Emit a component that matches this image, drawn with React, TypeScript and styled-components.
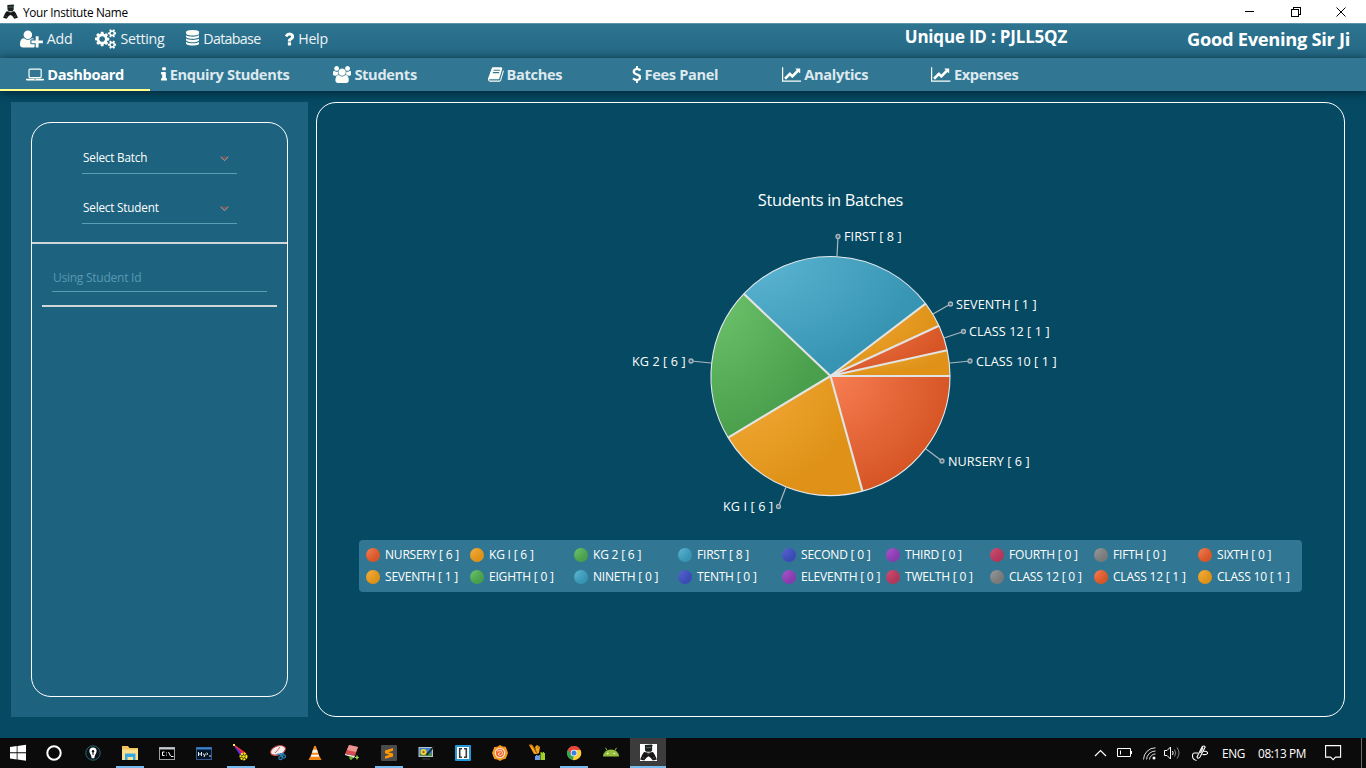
import React from "react";
import styled, { createGlobalStyle } from "styled-components";

const GlobalStyle = createGlobalStyle`
  * { box-sizing: border-box; }
  html, body { margin: 0; padding: 0; overflow: hidden; }
  body { font-family: "Open Sans", "Noto Sans", sans-serif; background: #054963; }
`;

const Window = styled.div`
  width: 1366px;
  height: 768px;
  display: flex;
  flex-direction: column;
  background: #054963;
  overflow: hidden;
`;

/* ---------- title bar ---------- */
const TitleBar = styled.header`
  height: 23px;
  flex: none;
  display: flex;
  align-items: center;
  background: #fff;
  padding: 0 2px 0 3px;
  color: #000;
`;
const TitleText = styled.span`
  flex: 1;
  margin-left: 5px;
  font-size: 11.8px;
  line-height: 22px;
  letter-spacing: -0.3px;
`;
const WindowButton = styled.span`
  width: 45.5px;
  height: 22px;
  display: flex;
  align-items: center;
  justify-content: center;
`;

/* ---------- menu ---------- */
const MenuBar = styled.nav`
  height: 35px;
  flex: none;
  display: flex;
  align-items: flex-start;
  padding: 0 16px 0 20px;
  background: linear-gradient(#2d7491, #246884);
  border-top: 1px solid #5a93aa;
`;
const MenuItem = styled.div<{ $width: number; $track: number; $height: number }>`
  width: ${(p) => p.$width}px;
  height: ${(p) => p.$height}px;
  display: flex;
  align-items: center;
  gap: 4px;
  color: #eef4f6;
  font-size: 14.2px;
  letter-spacing: ${(p) => p.$track}px;
`;
const MenuSpacer = styled.div`
  flex: 1;
`;
const Headline = styled.div<{ $size: number; $height: number; $gap?: number; $track: number }>`
  color: #fff;
  font-weight: 700;
  font-size: ${(p) => p.$size}px;
  line-height: ${(p) => p.$height}px;
  margin-right: ${(p) => p.$gap ?? 0}px;
  letter-spacing: ${(p) => p.$track}px;
  white-space: nowrap;
`;

/* ---------- tabs ---------- */
const TabBar = styled.nav`
  height: 33px;
  flex: none;
  display: flex;
  background: #317793;
  box-shadow: 0 1px 9px rgba(0, 20, 30, 0.75);
  z-index: 1;
`;
const Tab = styled.div<{ $active?: boolean }>`
  width: 150px;
  height: 33px;
  display: flex;
  align-items: center;
  justify-content: center;
  gap: 3px;
  padding-top: 2px;
  color: ${(p) => (p.$active ? "#fff" : "#dde9ee")};
  font-weight: 700;
  font-size: 14.6px;
  letter-spacing: -0.32px;
  border-bottom: 2px solid ${(p) => (p.$active ? "#ffff8d" : "transparent")};
  white-space: nowrap;

  span {
    padding-bottom: 2px;
  }
`;

/* ---------- body ---------- */
const Body = styled.main`
  flex: 1;
  display: flex;
  gap: 8px;
  padding: 11px 21px 21px 11px;
`;
const SidePanel = styled.aside`
  width: 297px;
  padding: 20px;
  background: #1d637f;
  display: flex;
`;
const SideCard = styled.div`
  flex: 1;
  border: 1px solid #fff;
  border-radius: 20px;
  display: flex;
  flex-direction: column;
  align-items: center;
  padding-top: 20px;
`;
const Select = styled.div<{ $after: number }>`
  width: 155px;
  height: 31px;
  margin-bottom: ${(p) => p.$after}px;
  padding: 0 8px 2px 1px;
  display: flex;
  align-items: center;
  justify-content: space-between;
  border-bottom: 1px solid #5c9db6;
  color: #fff;
  font-size: 11.7px;
  letter-spacing: -0.17px;

  svg {
    margin-top: 4px;
  }
`;
const Rule = styled.div<{ $width: number }>`
  width: ${(p) => p.$width}px;
  height: 2px;
  background: #cfd6da;
`;
const IdField = styled.div`
  width: 215px;
  height: 28px;
  margin: 20px 0 13px;
  padding-left: 1px;
  border-bottom: 1px solid #5c9db6;
  color: #5a98b1;
  font-size: 12px;
  line-height: 28px;
  letter-spacing: -0.25px;
`;
const ChartCard = styled.section`
  flex: 1;
  border: 1px solid #fff;
  border-radius: 20px;
  display: flex;
  flex-direction: column;
  align-items: center;
  padding-top: 85px;
`;
const ChartTitle = styled.h1`
  margin: 0;
  font-size: 16.4px;
  font-weight: 400;
  line-height: 24px;
  color: #fff;
  letter-spacing: -0.3px;
`;
const Pie = styled.svg`
  display: block;
  margin-top: 8px;
  flex: none;
`;
const Legend = styled.div`
  width: 943px;
  height: 52px;
  margin-top: 20px;
  padding: 4px 0 4px 7px;
  background: #317793;
  border-radius: 4px;
  display: grid;
  grid-template-columns: repeat(9, 104px);
  grid-template-rows: 22px 22px;
`;
const LegendItem = styled.div`
  display: flex;
  align-items: center;
  gap: 5px;
  color: #fff;
  font-size: 12px;
  letter-spacing: -0.2px;
  line-height: 16px;
  white-space: nowrap;
`;

/* ---------- taskbar ---------- */
const Taskbar = styled.footer`
  height: 30px;
  flex: none;
  display: flex;
  background: #0b0b0b;
  color: #fff;
`;
const TaskCell = styled.div<{ $width?: number; $before?: number; $after?: number; $state?: "open" | "active" }>`
  width: ${(p) => p.$width ?? 37}px;
  height: 30px;
  margin: 0 ${(p) => p.$after ?? 0}px 0 ${(p) => p.$before ?? 0}px;
  display: flex;
  flex-direction: column;
  align-items: center;
  justify-content: space-between;
  padding-top: 6px;
  background: ${(p) => (p.$state === "active" ? "#3c3c3c" : "transparent")};
  &::after {
    content: "";
    height: 2px;
    width: ${(p) => (p.$state === "active" ? "100%" : "28px")};
    background: ${(p) => (p.$state ? "#76b9ed" : "transparent")};
  }
`;
const Tray = styled.div`
  margin-left: auto;
  display: flex;
  align-items: center;
  font-size: 11.8px;
  letter-spacing: -0.35px;
`;
const TrayCell = styled.span<{ $width: number }>`
  width: ${(p) => p.$width}px;
  height: 30px;
  display: flex;
  align-items: center;
  white-space: nowrap;
`;
const ShowDesktop = styled.span`
  width: 5px;
  height: 30px;
  border-left: 1px solid #6a6a6a;
`;

/* ---------- glyphs ---------- */
const SMALL_GEAR =
  "v140q0 16-149 31-12 27-30 52 51 113 51 138 0 4-4 7-122 71-124 71-8 0-46-47t-52-68q-20 2-30 2t-30-2q-14 21-52 68t-46 47q-2 0-124-71-4-3-4-7 0-25 51-138-18-25-30-52-149-15-149-31v-140q0-16 149-31 13-29 30-52-51-113-51-138 0-4 4-7 4-2 35-20t59-34 30-16q8 0 46 46.5t52 67.5q20-2 30-2t30 2q51-71 92-112l6-2q4 0 124 70 4 3 4 7 0 25-51 138 17 23 30 52 149 15 149 31z";
const DISC = "q237 0 443-43t325-127v170q0 69-103 128t-280 93.5-385 34.5-385-34.5-280-93.5-103-128v-170q119 84 325 127t443 43z";

const GLYPHS: Record<string, [number, string]> = {
  userPlus: [2048, "M704 896q-159 0-271.5-112.5t-112.5-271.5 112.5-271.5 271.5-112.5 271.5 112.5 112.5 271.5-112.5 271.5-271.5 112.5zm960 128h352q13 0 22.5 9.5t9.5 22.5v192q0 13-9.5 22.5t-22.5 9.5h-352v352q0 13-9.5 22.5t-22.5 9.5h-192q-13 0-22.5-9.5t-9.5-22.5v-352h-352q-13 0-22.5-9.5t-9.5-22.5v-192q0-13 9.5-22.5t22.5-9.5h352v-352q0-13 9.5-22.5t22.5-9.5h192q13 0 22.5 9.5t9.5 22.5v352zm-736 224q0 52 38 90t90 38h256v238q-68 50-171 50h-874q-121 0-194-69t-73-190q0-53 3.5-103.5t14-109 26.5-108.5 43-97.5 62-81 85.5-53.5 111.5-20q19 0 39 17 79 61 154.5 91.5t164.5 30.5 164.5-30.5 154.5-91.5q20-17 39-17 132 0 217 96h-223q-52 0-90 38t-38 90v192z"],
  cogs: [1920, "M896 896q0-106-75-181t-181-75-181 75-75 181 75 181 181 75 181-75 75-181zm768 512q0-52-38-90t-90-38-90 38-38 90q0 53 37.5 90.5t90.5 37.5 90.5-37.5 37.5-90.5zm0-1024q0-52-38-90t-90-38-90 38-38 90q0 53 37.5 90.5t90.5 37.5 90.5-37.5 37.5-90.5zm-384 421v185q0 10-7 19.5t-16 10.5l-155 24q-11 35-32 76 34 48 90 115 7 11 7 20 0 12-7 19-23 30-82.5 89.5t-78.5 59.5q-11 0-21-7l-115-90q-37 19-77 31-11 108-23 155-7 24-30 24h-186q-11 0-20-7.5t-10-17.5l-23-153q-34-10-75-31l-118 89q-7 7-20 7-11 0-21-8-144-133-144-160 0-9 7-19 10-14 41-53t47-61q-23-44-35-82l-152-24q-10-1-17-9.5t-7-19.5v-185q0-10 7-19.5t16-10.5l155-24q11-35 32-76-34-48-90-115-7-11-7-20 0-12 7-20 22-30 82-89t79-59q11 0 21 7l115 90q34-18 77-32 11-108 23-154 7-24 30-24h186q11 0 20 7.5t10 17.5l23 153q34 10 75 31l118-89q8-7 20-7 11 0 21 8 144 133 144 160 0 8-7 19-12 16-42 54t-45 60q23 48 34 82l152 23q10 2 17 10.5t7 19.5zm640 533" + SMALL_GEAR + "m0-1024" + SMALL_GEAR],
  database: [1536, "M768 768" + DISC + "m0 768" + DISC + "m0-384" + DISC + "m0-1152q208 0 385 34.5t280 93.5 103 128v128q0 69-103 128t-280 93.5-385 34.5-385-34.5-280-93.5-103-128v-128q0-69 103-128t280-93.5 385-34.5z"],
  question: [1024, "M704 1256v240q0 16-12 28t-28 12h-240q-16 0-28-12t-12-28v-240q0-16 12-28t28-12h240q16 0 28 12t12 28zm316-600q0 54-15.5 101t-35 76.5-55 59.5-57.5 43.5-61 35.5q-41 23-68.5 65t-27.5 67q0 17-12 32.5t-28 15.5h-240q-15 0-25.5-18.5t-10.5-37.5v-45q0-83 65-156.5t143-108.5q59-27 84-56t25-76q0-42-46.5-74t-107.5-32q-65 0-108 29-35 25-107 115-13 16-31 16-12 0-25-8l-164-125q-13-10-15.5-25t5.5-28q160-266 464-266 80 0 161 31t146 83 106 127.5 41 158.5z"],
  laptop: [1920, "M416 1280q-66 0-113-47t-47-113v-704q0-66 47-113t113-47h1088q66 0 113 47t47 113v704q0 66-47 113t-113 47h-1088zm-32-864v704q0 13 9.5 22.5t22.5 9.5h1088q13 0 22.5-9.5t9.5-22.5v-704q0-13-9.5-22.5t-22.5-9.5h-1088q-13 0-22.5 9.5t-9.5 22.5zm1376 928h160v96q0 40-47 68t-113 28h-1600q-66 0-113-28t-47-68v-96h1760zm-720 96q16 0 16-16t-16-16h-160q-16 0-16 16t16 16h160z"],
  info: [640, "M640 1344v128q0 26-19 45t-45 19h-512q-26 0-45-19t-19-45v-128q0-26 19-45t45-19h64v-384h-64q-26 0-45-19t-19-45v-128q0-26 19-45t45-19h384q26 0 45 19t19 45v576h64q26 0 45 19t19 45zm-128-1152v192q0 26-19 45t-45 19h-256q-26 0-45-19t-19-45v-192q0-26 19-45t45-19h256q26 0 45 19t19 45z"],
  users: [1920, "M593 896q-162 5-265 128h-134q-82 0-138-40.5t-56-118.5q0-353 124-353 6 0 43.5 21t97.5 42.5 119 21.5q67 0 133-23-5 37-5 66 0 139 81 256zm1071 637q0 120-73 189.5t-194 69.5h-874q-121 0-194-69.5t-73-189.5q0-53 3.5-103.5t14-109 26.5-108.5 43-97.5 62-81 85.5-53.5 111.5-20q10 0 43 21.5t73 48 107 48 135 21.5 135-21.5 107-48 73-48 43-21.5q61 0 111.5 20t85.5 53.5 62 81 43 97.5 26.5 108.5 14 109 3.5 103.5zm-1024-1277q0 106-75 181t-181 75-181-75-75-181 75-181 181-75 181 75 75 181zm704 384q0 159-112.5 271.5t-271.5 112.5-271.5-112.5-112.5-271.5 112.5-271.5 271.5-112.5 271.5 112.5 112.5 271.5zm576 225q0 78-56 118.5t-138 40.5h-134q-103-123-265-128 81-117 81-256 0-29-5-66 66 23 133 23 59 0 119-21.5t97.5-42.5 43.5-21q124 0 124 353zm-128-609q0 106-75 181t-181 75-181-75-75-181 75-181 181-75 181 75 75 181z"],
  book: [1664, "M1639 478q40 57 18 129l-275 906q-19 64-76.5 107.5t-122.5 43.5h-923q-77 0-148.5-53.5t-99.5-131.5q-24-67-2-127 0-4 3-27t4-37q1-8-3-21.5t-3-19.5q2-11 8-21t16.5-23.5 16.5-23.5q23-38 45-91.5t30-91.5q3-10 .5-30t-.5-28q3-11 17-28t17-23q21-36 42-92t25-90q1-9-2.5-32t.5-28q4-13 22-30.5t22-22.5q19-26 42.5-84.5t27.5-96.5q1-8-3-25.5t-2-26.5q2-8 9-18t18-23 17-21q8-12 16.5-30.5t15-35 16-36 19.5-32 26.5-23.5 36-11.5 47.5 5.5l-1 3q38-9 51-9h761q74 0 114 56t18 130l-274 906q-36 119-71.5 153.5t-128.5 34.5h-869q-27 0-38 15-11 16-1 43 24 70 144 70h923q29 0 56-15.5t35-41.5l300-987q7-22 5-57 38 15 59 43zm-1064 2q-4 13 2 22.5t20 9.5h608q13 0 25.5-9.5t16.5-22.5l21-64q4-13-2-22.5t-20-9.5h-608q-13 0-25.5 9.5t-16.5 22.5zm-83 256q-4 13 2 22.5t20 9.5h608q13 0 25.5-9.5t16.5-22.5l21-64q4-13-2-22.5t-20-9.5h-608q-13 0-25.5 9.5t-16.5 22.5z"],
  dollar: [1024, "M978 1185q0 153-99.5 263.5t-258.5 136.5v175q0 14-9 23t-23 9h-135q-13 0-22.5-9.5t-9.5-22.5v-175q-66-9-127.5-31t-101.5-44.5-74-48-46.5-37.5-17.5-18q-17-21-2-41l103-135q7-10 23-12 15-2 24 9l2 2q113 99 243 125 37 8 74 8 81 0 142.5-43t61.5-122q0-28-15-53t-33.5-42-58.5-37.5-66-32-80-32.5q-39-16-61.5-25t-61.5-26.5-62.5-31-56.5-35.5-53.5-42.5-43.5-49-35.5-58-21-66.5-8.5-78q0-138 98-242t255-134v-180q0-13 9.5-22.5t22.5-9.5h135q14 0 23 9t9 23v176q57 6 110.5 23t87 33.5 63.5 37.5 39 29 15 14q17 18 5 38l-81 146q-8 15-23 16-14 3-27-7-3-3-14.5-12t-39-26.5-58.5-32-74.5-26-85.5-11.5q-95 0-155 43t-60 111q0 26 8.5 48t29.5 41.5 39.5 33 56 31 60.5 27 70 27.5q53 20 81 31.5t76 35 75.5 42.5 62 50 53 63.5 31.5 76.5 13 94z"],
  chart: [2048, "M2048 1536v128h-2048v-1536h128v1408h1920zm-128-1248v435q0 21-19.5 29.5t-35.5-7.5l-121-121-633 633q-10 10-23 10t-23-10l-233-233-416 416-192-192 585-585q10-10 23-10t23 10l233 233 464-464-121-121q-16-16-7.5-35.5t29.5-19.5h435q14 0 23 9t9 23z"],
};

function Glyph({ name, size }: { name: string; size: number }) {
  const [w, d] = GLYPHS[name];
  return (
    <svg width={(w / 1792) * size} height={size} viewBox={`0 0 ${w} 1792`} fill="#fffffa">
      <path d={d} />
    </svg>
  );
}

function ReaderIcon({ size, tile }: { size: number; tile?: boolean }) {
  return (
    <svg width={size} height={size} viewBox="0 0 16 16">
      {tile && <rect width="16" height="16" fill="#fff" />}
      <path d="M4.600 1l6.600-.6.800 1-.6.6v4.200L10.400 7.400H6L4.800 6.400z" fill="#1c2422" />
      <path d="M5.800 2.800h4.600v1H5.800z" fill="#53665c" />
      <path d="M3.800 7.600l4.200.6 4.200-.6 1.700 2.400 2 4.600-3.800 1-2.400-3L8 11.600l-1.700 1-2.400 3-3.800-1L2.100 10z" fill="#161616" />
      <path d="M2.400 12.600l1.600.8M12 13.400l1.600-.8M6.800 9.200h2.400" stroke="#777" strokeWidth=".7" />
    </svg>
  );
}

const MENU = [
  { icon: "userPlus", size: 20, label: "Add", width: 75, track: -0.2, height: 29 },
  { icon: "cogs", size: 20, label: "Setting", width: 91, track: -0.25, height: 29 },
  { icon: "database", size: 15.5, label: "Database", width: 98, track: -0.65, height: 28 },
  { icon: "question", size: 18, label: "Help", width: 60, track: -0.3, height: 29 },
];

const TABS = [
  ["laptop", "Dashboard"],
  ["info", "Enquiry Students"],
  ["users", "Students"],
  ["book", "Batches"],
  ["dollar", "Fees Panel"],
  ["chart", "Analytics"],
  ["chart", "Expenses"],
];

/* ---------- chart ---------- */
const COLORS: Record<string, [string, string]> = {
  red: ["#f77e53", "#d75626"],
  orange: ["#f5ae3e", "#df9217"],
  green: ["#70c46e", "#499f4b"],
  blue: ["#5eb7d4", "#3795b3"],
  indigo: ["#5966cf", "#3b4bb6"],
  purple: ["#aa55cf", "#883bae"],
  crimson: ["#d24f75", "#b0385a"],
  gray: ["#999b9c", "#787979"],
};

const SLICES = [
  { value: 6, color: "red", label: "NURSERY [ 6 ]", from: [926, 449], dot: [942, 461], x: 948, w: 81.5 },
  { value: 6, color: "orange", label: "KG I [ 6 ]", from: [786, 487], dot: [778.5, 506.5], x: 723, w: 50 },
  { value: 6, color: "green", label: "KG 2 [ 6 ]", from: [711, 363], dot: [691, 361], x: 632, w: 53.5 },
  { value: 8, color: "blue", label: "FIRST [ 8 ]", from: [837, 256], dot: [838, 236.5], x: 844, w: 57.5 },
  { value: 1, color: "orange", label: "SEVENTH [ 1 ]", from: [933, 314], dot: [950.5, 304], x: 956, w: 80.5 },
  { value: 1, color: "red", label: "CLASS 12 [ 1 ]", from: [944, 338], dot: [963.5, 331.5], x: 969, w: 80.5 },
  { value: 1, color: "orange", label: "CLASS 10 [ 1 ]", from: [950, 363], dot: [970, 361], x: 976, w: 80.5 },
];

const LEGEND: [string, string][] = [
  ["red", "NURSERY [ 6 ]"], ["orange", "KG I [ 6 ]"], ["green", "KG 2 [ 6 ]"], ["blue", "FIRST [ 8 ]"],
  ["indigo", "SECOND [ 0 ]"], ["purple", "THIRD [ 0 ]"], ["crimson", "FOURTH [ 0 ]"], ["gray", "FIFTH [ 0 ]"],
  ["red", "SIXTH [ 0 ]"], ["orange", "SEVENTH [ 1 ]"], ["green", "EIGHTH [ 0 ]"], ["blue", "NINETH [ 0 ]"],
  ["indigo", "TENTH [ 0 ]"], ["purple", "ELEVENTH [ 0 ]"], ["crimson", "TWELTH [ 0 ]"], ["gray", "CLASS 12 [ 0 ]"],
  ["red", "CLASS 12 [ 1 ]"], ["orange", "CLASS 10 [ 1 ]"],
];

function PieChart() {
  const cx = 830.5;
  const cy = 376;
  const r = 119.5;
  const total = SLICES.reduce((sum, s) => sum + s.value, 0);
  let angle = 0;
  return (
    <Pie width="481" height="300" viewBox="590 220 481 300">
      <defs>
        {Object.entries(COLORS).map(([name, [light, dark]]) => (
          <radialGradient key={name} id={`fill-${name}`} cx="0" cy="0" r="1" fx="0" fy="0">
            <stop offset="0" stopColor={light} />
            <stop offset="1" stopColor={dark} />
          </radialGradient>
        ))}
      </defs>
      {SLICES.map((s) => {
        const a0 = angle;
        const a1 = (angle += (s.value / total) * Math.PI * 2);
        const p = (a: number) => `${cx + r * Math.cos(a)} ${cy + r * Math.sin(a)}`;
        return (
          <g key={s.label}>
            <path d={`M${cx} ${cy}L${p(a0)}A${r} ${r} 0 0 1 ${p(a1)}Z`} fill={`url(#fill-${s.color})`} />
            <path d={`M${p(a0)}A${r} ${r} 0 0 1 ${p(a1)}`} fill="none" stroke="#e4eaee" strokeWidth="1.1" />
          </g>
        );
      })}
      {SLICES.map((s) => {
        const a = (angle += (s.value / total) * Math.PI * 2);
        return (
          <line key={s.label} x1={cx} y1={cy} x2={cx + r * Math.cos(a)} y2={cy + r * Math.sin(a)} stroke="#e2e4e4" strokeWidth="2.1" />
        );
      })}
      {SLICES.map((s) => (
        <g key={s.label}>
          <line x1={s.from[0]} y1={s.from[1]} x2={s.dot[0]} y2={s.dot[1]} stroke="#a9b8c0" strokeWidth="1.2" />
          <circle cx={s.dot[0]} cy={s.dot[1]} r="2" fill="#41687b" stroke="#a9b5bd" strokeWidth="1.3" />
          <text x={s.x} y={Math.floor(s.dot[1]) + 5} textLength={s.w} fontSize="12.6" fill="#fff">
            {s.label}
          </text>
        </g>
      ))}
    </Pie>
  );
}

/* ---------- taskbar pictures ---------- */
type Task = { state?: "open" | "active"; art: React.ReactNode };
const TASKS: Task[] = [
  { art: <><circle cx="9" cy="9" r="7.2" fill="#081418" stroke="#2a6270" /><path d="M9 3.5a3.6 3.6 0 0 1 3.6 3.7c0 2-2.2 3.6-2.2 7H7.6c0-3.4-2.2-5-2.2-7A3.6 3.6 0 0 1 9 3.5z" fill="#fff" /><circle cx="9" cy="7.3" r="1.2" fill="#111" /><path d="M9 8v3" stroke="#111" /></> },
  { state: "open", art: <><path d="M1 2h6l1.5 2H17v12H1z" fill="#f0c35c" /><path d="M1 5.5h16V16H1z" fill="#ffe08c" /><path d="M4 9.5h10.5v6.5H12v-3H6.5v3H4z" fill="#35a9e8" /></> },
  { art: <><rect x="1.5" y="3.5" width="15" height="12" fill="#000" stroke="#9b9fa3" /><path d="M1.5 4.5h15" stroke="#c5cbd0" strokeWidth="2" /><path d="M6.5 8h-2v3.500h2M8.500 8.500v.8m0 1.400v.8M10.500 8l2 4M13 12.500h2.500" stroke="#fff" fill="none" /></> },
  { art: <><rect x="1.5" y="3.5" width="15" height="12" fill="#061428" stroke="#35588e" /><path d="M1.5 4.5h15" stroke="#3b83cf" strokeWidth="2" /><path d="M3.500 12V8m0 2h2.500M6.500 8v4M8.300 9.500l1 2m1.200-2L9 13M11.500 8.800l1.500 1-1.500 1M14 12h2" stroke="#fff" fill="none" strokeWidth=".9" /></> },
  { state: "open", art: <><path d="M3 2l11 8-4 4z" fill="#e0176b" /><path d="M3 2l6 9" stroke="#5a32dc" strokeWidth="1.8" /><path d="M3 2l10 7" stroke="#f33" strokeWidth="1.5" /><rect x="1" y="0" width="2" height="2" fill="#ffe94d" /><circle cx="11.5" cy="12.5" r="3" fill="#302f00" stroke="#ffec19" strokeWidth="2" strokeDasharray="2 .8" /><circle cx="11.5" cy="12.5" r="1.3" fill="#ffec19" /></> },
  { art: <><ellipse cx="9" cy="6.500" rx="7.700" ry="4.500" transform="rotate(-20 9 6.500)" fill="#f8eeee" stroke="#b84444" strokeWidth="1" /><path d="M2 10q3 2 7 .5M11 3q-2 3-5 6" stroke="#cf5959" fill="none" /><path d="M8 10.500l7-.8M12 9v4" stroke="#2f86b8" strokeWidth="1.700" /><circle cx="11.500" cy="14" r="1.700" fill="none" stroke="#257ba9" strokeWidth="1.300" /><circle cx="15" cy="12.500" r="1.500" fill="none" stroke="#257ba9" strokeWidth="1.300" /></> },
  { art: <><path d="M8.2 2h1.6L14 14H4z" fill="#f58a1e" /><path d="M7 5.7h4l1 3H6zM5.3 10.8h7.4l.7 1.9H4.6z" fill="#f4f4f4" /><path d="M4 13h10l1.5 3h-13z" fill="#f28716" /></> },
  { art: <><path d="M6 1l9 2-3 9-10-2z" fill="#d44c4d" /><path d="M6 1l9 2-2 5L4 6z" fill="#eb9491" /><path d="M2 10l10 2-1 2-9-3z" fill="#eee" /><path d="M8 12v4m-2-2h4M14 11.500v4m-2-2h4" stroke="#7dd331" strokeWidth="1.200" /><path d="M14 12v3" stroke="#f4ee62" strokeWidth=".7" /></> },
  { state: "open", art: <><rect x="1" y="1" width="16" height="16" rx="1" fill="#4b4b4b" /><path d="M13 4v2.700L8.200 8.200 13 9.600v2.900l-8 2.300v-2.600l4.500-1.500L5 9.300V6.400z" fill="#ff9800" /></> },
  { art: <><rect x="2" y="3.5" width="13.5" height="9" fill="#3d80cc" stroke="#b7c6ca" /><path d="M3 9.500h12v2.500H3z" fill="#4f8b49" /><circle cx="6.5" cy="8" r="3" fill="#f4d43b" /><circle cx="6.5" cy="8" r="1.2" fill="#9b6b14" /><path d="M16.500 3L9.500 11" stroke="#222" strokeWidth="1.8" /><path d="M5 15h8" stroke="#2d3336" strokeWidth="1.500" /></> },
  { art: <><rect x="1" y="1" width="16" height="16" rx="1" fill="#2297d4" /><rect x="3" y="3" width="12" height="12" fill="#fff" /><path d="M8 4.8H5.7v8.4H8M10 4.8h2.3v8.4H10" fill="none" stroke="#383838" strokeWidth="1.6" /></> },
  { art: <><path d="M9 1l2.7 1.6 3 .2 1.2 3L17 9l-1.2 3-1.1 2.800-3 .6L9 17l-2.700-1.600-3-.5L2.100 12 1 9l1.200-3 1.100-3 3-.3z" fill="#f6991d" /><circle cx="9" cy="9" r="4.700" fill="#f26430" stroke="#ffe1c9" strokeWidth="1.200" /><path d="M6 7l4.500-.5 1.300 3.300-2.800 2-2-2 2.500-1.300" stroke="#ffe1c9" fill="none" /></> },
  { art: <><path d="M1 1h3l5 9H6zM7 3l2-2 3 2-1 6-2 1z" fill="#f6a31a" /><path d="M1 1l3 0 4 6M9 3l2 1" stroke="#c36d08" fill="none" /><path d="M7 12h1v-1h1.500v1h1v-1h1.500v5H7z" fill="#6b9cf0" /><path d="M12.500 9V8h1.200v1h1V8h1.300v1h1v7h-4.500z" fill="#a1cf26" /></> },
  { state: "open", art: <><circle cx="9" cy="9" r="7" fill="#e4473c" /><path d="M9 9L2.900 5.500A7 7 0 0 0 8 16l3-5.800z" fill="#31a853" /><path d="M9 9l-1 7A7 7 0 0 0 15.500 6H9z" fill="#fbce31" /><path d="M2.900 5.500A7 7 0 0 1 15.300 6H9L6.500 11z" fill="#e4473c" /><circle cx="9" cy="9" r="3.300" fill="#f5f5f5" /><circle cx="9" cy="9" r="2.500" fill="#397fe8" /></> },
  { art: <><path d="M1 12.500a8 7 0 0 1 16 0z" fill="#93bd3a" /><path d="M5 6.500L3.500 3.800M13 6.500l1.500-2.700" stroke="#93bd3a" strokeWidth="1" /><circle cx="5.700" cy="9.500" r=".8" fill="#fff" /><circle cx="12.300" cy="9.500" r=".8" fill="#fff" /></> },
];

export default function App() {
  return (
    <Window>
      <GlobalStyle />
      <TitleBar>
        <ReaderIcon size={15} />
        <TitleText>Your Institute Name</TitleText>
        <WindowButton>
          <svg width="10" height="10" shapeRendering="crispEdges"><path d="M0 4.500h9" stroke="#000" /></svg>
        </WindowButton>
        <WindowButton>
          <svg width="10" height="10" shapeRendering="crispEdges" fill="none" stroke="#000"><path d="M.5 2.500h6.500v7H.5zM2.500 2V.5h7v7H7.500" /></svg>
        </WindowButton>
        <WindowButton>
          <svg width="10" height="10" stroke="#000"><path d="M.5.5l9 9M9.500.5l-9 9" /></svg>
        </WindowButton>
      </TitleBar>

      <MenuBar>
        {MENU.map((m) => (
          <MenuItem key={m.label} $width={m.width} $track={m.track} $height={m.height}>
            <Glyph name={m.icon} size={m.size} />
            <span>{m.label}</span>
          </MenuItem>
        ))}
        <MenuSpacer />
        <Headline $size={17} $height={26} $gap={120} $track={-0.2}>Unique ID : PJLL5QZ</Headline>
        <Headline $size={18.3} $height={29} $track={-0.3}>Good Evening Sir Ji</Headline>
      </MenuBar>

      <TabBar>
        {TABS.map(([icon, label], i) => (
          <Tab key={label} $active={i === 0}>
            <Glyph name={icon} size={17} />
            <span>{label}</span>
          </Tab>
        ))}
      </TabBar>

      <Body>
        <SidePanel>
          <SideCard>
            {["Select Batch", "Select Student"].map((label, i) => (
              <Select key={label} $after={19 - i}>
                <span>{label}</span>
                <svg width="9" height="6"><path d="M.5.5h8l-4 4.500z" fill="#6e5a5c" /><path d="M.5.700l4 4 4-4" fill="none" stroke="#a39ea0" /></svg>
              </Select>
            ))}
            <Rule $width={255} />
            <IdField>Using Student Id</IdField>
            <Rule $width={235} />
          </SideCard>
        </SidePanel>

        <ChartCard>
          <ChartTitle>Students in Batches</ChartTitle>
          <PieChart />
          <Legend>
            {LEGEND.map(([color, label]) => (
              <LegendItem key={label}>
                <svg width="14" height="14"><circle cx="7" cy="7" r="7" fill={`url(#fill-${color})`} /></svg>
                <span>{label}</span>
              </LegendItem>
            ))}
          </Legend>
        </ChartCard>
      </Body>

      <Taskbar>
        <TaskCell $width={36}>
          <svg width="16" height="17" fill="#fff"><path d="M0 3l6.700-1v6.300H0zM7.500 1.900L16 .7v7.600H7.500zM0 9.200h6.700v6.300L0 14.600zM7.500 9.200H16v7.500l-8.500-1.200z" /></svg>
        </TaskCell>
        <TaskCell $width={36} $after={2}>
          <svg width="18" height="18"><circle cx="9" cy="9" r="6.700" fill="none" stroke="#fff" strokeWidth="2" /></svg>
        </TaskCell>
        {TASKS.map((t, i) => (
          <TaskCell key={i} $state={t.state}>
            <svg width="18" height="18">{t.art}</svg>
          </TaskCell>
        ))}
        <TaskCell $width={36} $before={1} $state="active">
          <ReaderIcon size={17} tile />
        </TaskCell>
        <Tray>
          <TrayCell $width={23}>
            <svg width="13" height="8" fill="none" stroke="#fff" strokeWidth="1.200"><path d="M1 7l5.500-5.500L12 7" /></svg>
          </TrayCell>
          <TrayCell $width={26}>
            <svg width="16" height="10" fill="none" stroke="#fff"><path d="M.5.5h13v8H.5zM14.500 3v3M3.500 2.500v4" /></svg>
          </TrayCell>
          <TrayCell $width={21}>
            <svg width="13" height="13" fill="none" stroke="#ddd" strokeWidth="1"><path d="M.5 12.500A12 12 0 0 1 12.500.8M3.500 12.500a9 9 0 0 1 9-8.500M6.500 12.500a6 6 0 0 1 6-5.500" /><circle cx="11" cy="11" r="1.500" fill="#fff" stroke="none" /></svg>
          </TrayCell>
          <TrayCell $width={28}>
            <svg width="17" height="14" fill="none" stroke="#fff"><path d="M.5 4.500h2.500L6.500 1v12L3 9.500H.5zM8.500 5q1.300 2 0 4" /><path d="M10.500 3.500q2.500 3.500 0 7M13 1.500q4 5.500 0 11" stroke="#888" /></svg>
          </TrayCell>
          <TrayCell $width={30}>
            <svg width="17" height="17" fill="none" stroke="#fff" strokeWidth="1.100"><path d="M5 12L10 2q2-2 3.200 0L8 12q-2 2.500-3 0zM6 8H2q-1.500 0-1.500 3 0 3.500 4 4.500M11 6q5 0 4.500 2.500-1 1.500-5 1M11 2.500L8.500 8" /></svg>
          </TrayCell>
          <TrayCell $width={36}>ENG</TrayCell>
          <TrayCell $width={67}>08:13 PM</TrayCell>
          <TrayCell $width={36}>
            <svg width="17" height="16" fill="none" stroke="#fff" strokeWidth="1.100"><path d="M.6.6h15v11.500h-5L8.100 14.600 5.600 12.100h-5z" /></svg>
          </TrayCell>
          <ShowDesktop />
        </Tray>
      </Taskbar>
    </Window>
  );
}
